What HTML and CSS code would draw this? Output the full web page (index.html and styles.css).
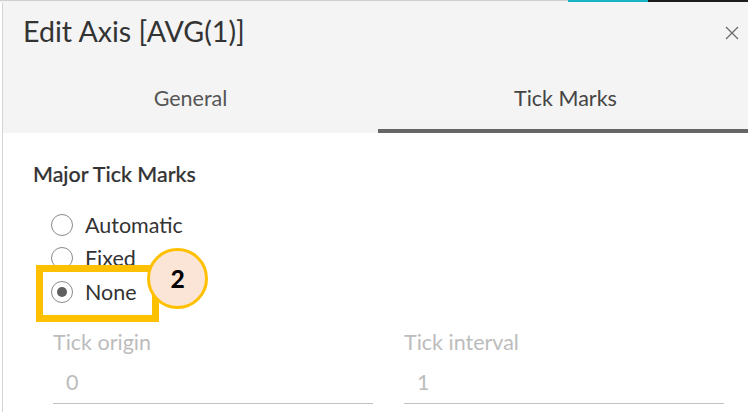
FILE: index.html
```html
<!DOCTYPE html>
<html>
<head>
<meta charset="utf-8">
<link rel="stylesheet" href="styles.css">
</head>
<body>
<div class="topstrip"><span class="seg-gray"></span><span class="seg-teal"></span><span class="seg-black"></span></div>
<div class="dialog">
  <div class="header">
    <div class="titlerow">
      <h1 class="title">Edit Axis [AVG(1)]</h1>
      <svg class="close" width="14" height="14" viewBox="0 0 14 14"><path d="M1 1L13 13M13 1L1 13" stroke="#6b6b6b" stroke-width="1.3" fill="none"/></svg>
    </div>
    <div class="tabs">
      <div class="tab">General</div>
      <div class="tab active">Tick Marks</div>
    </div>
  </div>
  <div class="content">
    <div class="section-title">Major Tick Marks</div>
    <div class="radios">
      <label class="radio"><span class="dot"></span>Automatic</label>
      <label class="radio"><span class="dot"></span>Fixed</label>
      <label class="radio checked"><span class="dot"></span>None</label>
    </div>
    <div class="fields">
      <div class="field">
        <div class="flabel">Tick origin</div>
        <div class="fvalue">0</div>
      </div>
      <div class="field">
        <div class="flabel">Tick interval</div>
        <div class="fvalue">1</div>
      </div>
    </div>
  </div>
  <div class="highlight"></div>
  <div class="badge">2</div>
</div>
</body>
</html>
```
FILE: styles.css
```css
html, body {
  margin: 0;
  padding: 0;
  background: #ffffff;
  width: 748px;
  height: 412px;
  overflow: hidden;
  font-family: Lato, "Open Sans", sans-serif;
}
.topstrip {
  display: flex;
  height: 3px;
  background: #f4f4f4;
}
.seg-gray {
  width: 568px;
  border-top: 1px solid #cfcfcf;
}
.seg-teal {
  width: 80px;
  background: #17b3c5;
  height: 2px;
}
.seg-black {
  flex: 1;
  background: #1d1d1d;
  height: 2px;
}
.dialog {
  position: relative;
  margin-left: 2px;
  width: 750px;
  border-left: 1px solid #d4d4d4;
  height: 409px;
}
.header {
  background: #f4f4f4;
}
.titlerow {
  display: flex;
  align-items: center;
  justify-content: space-between;
  height: 60px;
  padding: 0 14px 4px 20px;
  box-sizing: border-box;
}
.title {
  margin: 0;
  font-weight: 400;
  font-size: 28.6px;
  line-height: 34px;
  color: #333333;
}
.close {
  display: block;
  margin-top: 4px;
}
.tabs {
  display: flex;
  height: 70px;
}
.tab {
  flex: 1;
  display: flex;
  align-items: center;
  justify-content: center;
  font-size: 21.5px;
  color: #555555;
  border-bottom: 4px solid transparent;
  padding-top: 4px;
}
.tab.active {
  border-bottom-color: #666666;
  color: #444444;
}
.content {
  padding: 29px 0 0 30px;
}
.section-title {
  font-size: 21.4px;
  color: #333333;
  font-weight: 500;
  line-height: 24px;
  -webkit-text-stroke: 0.2px #333333;
}
.radios {
  display: flex;
  flex-direction: column;
  margin-top: 22px;
  margin-left: 18px;
}
.radio {
  display: flex;
  align-items: center;
  height: 33.5px;
  font-size: 21.5px;
  color: #333333;
}
.dot {
  width: 20px;
  height: 20px;
  border: 1px solid #8a8a8a;
  border-radius: 50%;
  margin-right: 12px;
  background: #ffffff;
  display: flex;
  align-items: center;
  justify-content: center;
  flex: none;
}
.checked .dot::after {
  content: "";
  width: 10px;
  height: 10px;
  border-radius: 50%;
  background: #5f5f5f;
}
.fields {
  display: flex;
  gap: 31px;
  margin-top: 21px;
  margin-left: 20px;
}
.field {
  width: 320px;
  border-bottom: 1px solid #c2c2c2;
}
.flabel {
  font-size: 21.5px;
  color: #bcbcbc;
  line-height: 24px;
}
.fvalue {
  font-size: 21.5px;
  color: #bcbcbc;
  line-height: 24px;
  padding: 16px 0 9px 13px;
}
.highlight {
  position: absolute;
  left: 33px;
  top: 262px;
  width: 109px;
  height: 43px;
  border: 7px solid #ffc000;
}
.badge {
  position: absolute;
  left: 144px;
  top: 245px;
  width: 55px;
  height: 55px;
  border: 3px solid #ffc000;
  border-radius: 50%;
  background: #fbe5d6;
  display: flex;
  align-items: center;
  justify-content: center;
  font-family: Carlito, Calibri, "Liberation Sans", sans-serif;
  font-weight: 700;
  font-size: 28px;
  color: #000000;
}
```
